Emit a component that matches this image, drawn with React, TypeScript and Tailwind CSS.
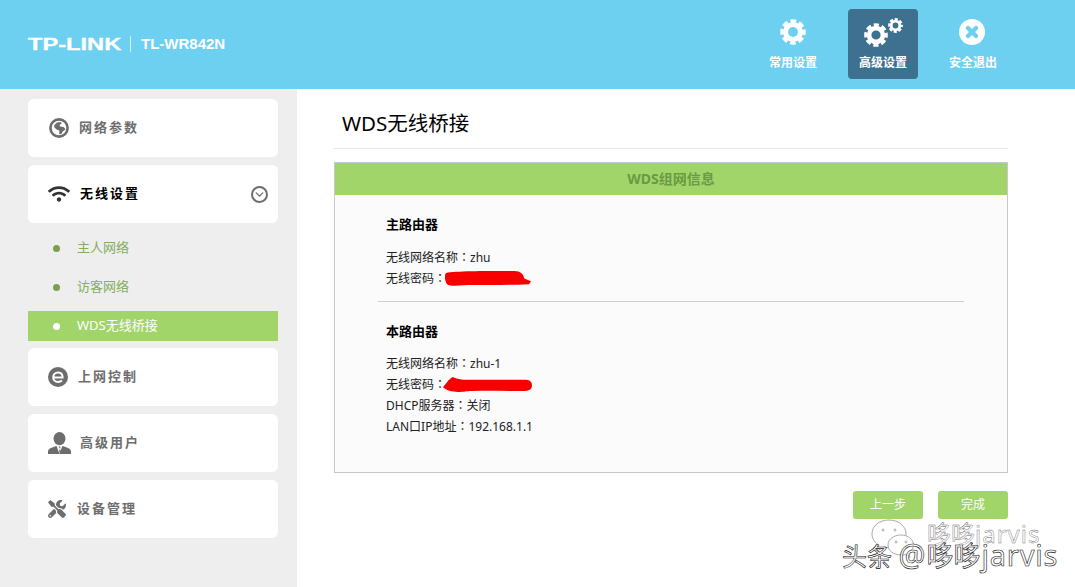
import { ChevronDown } from "lucide-react";
import { FaTools, FaWifi } from "react-icons/fa";

const font = { fontFamily: '"Noto Sans", "Noto Sans CJK SC", sans-serif' };

function Scribble({ className, d }: { className: string; d: string }) {
  return (
    <svg className={className} viewBox="0 0 90 16" preserveAspectRatio="none" fill="#f80000">
      <path d={d} />
    </svg>
  );
}

// Noto's TC face centres the full width colon the way the reference does
function Colon() {
  return <span className="leading-none" style={{ fontFamily: '"Noto Sans CJK TC", sans-serif' }}>：</span>;
}

function Gear({ size, className }: { size: number; className?: string }) {
  return (
    <svg width={size} height={size} viewBox="0 0 26 26" fill="none" stroke="#fff" className={className}>
      <circle cx="13" cy="13" r="7.5" strokeWidth="5" />
      <circle cx="13" cy="13" r="11" strokeWidth="3.6" strokeDasharray="5.6 3.04" strokeDashoffset="2.8" />
    </svg>
  );
}

function GlobeIcon() {
  return (
    <svg width="20" height="20" viewBox="0 0 20 20" fill="none">
      <circle cx="10" cy="10" r="8.6" stroke="#6d6d6d" strokeWidth="2.6" />
      <path d="M5 7.5 8 4.5l4-.5.6 1.6-2 1.4.4 1.6 3.6.4 2 2.2-2.8 2.4-1.6 2.6-2-.2.2-3.4-2.4-.8L5.6 9.8z" fill="#6d6d6d" />
    </svg>
  );
}

function EIcon() {
  return (
    <svg width="20" height="20" viewBox="0 0 20 20">
      <circle cx="10" cy="10" r="10" fill="#6d6d6d" />
      <path d="M5.2 10.4h9.400c0-3.200-2-5-4.500-5-2.700 0-4.900 2-4.900 4.800s2.100 4.800 4.900 4.800c1.600 0 2.900-.5 3.900-1.400" fill="none" stroke="#fff" strokeWidth="2" />
    </svg>
  );
}

function UserIcon() {
  return (
    <svg width="23" height="22" viewBox="0 0 23 22">
      <ellipse cx="11.5" cy="6.6" rx="6" ry="6.6" fill="#6d6d6d" />
      <path d="M0 22v-2.600c0-2.600 3.400-3.800 8.600-5.400L11.500 22l2.900-8c5.200 1.600 8.600 2.800 8.600 5.400V22z" fill="#6d6d6d" />
      <path d="M10.500 14.600h2l-.4 1.800.8 3.400-.9 1.400-.9-1.400.8-3.400z" fill="#6d6d6d" />
    </svg>
  );
}

function CloseIcon() {
  return (
    <svg width="26" height="26" viewBox="0 0 26 26">
      <circle cx="13" cy="13" r="13" fill="#fff" />
      <path d="M9 9l8 8m0-8l-8 8" stroke="#6dd0f1" strokeWidth="4.4" strokeLinecap="round" />
    </svg>
  );
}

function NavButton({ label, active, children }: { label: string; active?: boolean; children: React.ReactNode }) {
  return (
    <div className={"w-[70px] h-[70px] rounded-[4px] flex flex-col items-center text-white text-xs font-bold " + (active ? "bg-[#3d718f]" : "")}>
      <div className="h-[46px] w-full flex items-center justify-center">{children}</div>
      <span className="leading-[16px]">{label}</span>
    </div>
  );
}

function MenuCard({ icon, label, dark, iconBox = "w-[32px]", children }: { icon: React.ReactNode; label: string; dark?: boolean; iconBox?: string; children?: React.ReactNode }) {
  return (
    <div className="h-[58px] bg-white rounded-[6px] pl-[20px] pr-[10px] flex items-center">
      <div className={"shrink-0 " + iconBox}>{icon}</div>
      <span className={"text-[13px] font-bold tracking-[2px] " + (dark ? "text-black" : "text-[#6d6d6d]")}>{label}</span>
      {children}
    </div>
  );
}

function SubItem({ label, active }: { label: string; active?: boolean }) {
  return (
    <div className={"h-[30px] pl-[25px] flex items-center text-[13px] " + (active ? "bg-[#a2d569] text-white" : "text-[#84ad5c]")}>
      <span className={"w-[7px] h-[7px] rounded-full mr-[17px] " + (active ? "bg-white" : "bg-[#7aa04f]")} />
      {label}
    </div>
  );
}

export default function App() {
  return (
    <div className="relative w-[1075px] h-[587px] overflow-hidden bg-white flex flex-col" style={font}>
      {/* header */}
      <header className="h-[89px] shrink-0 bg-[#6dd0f1] pl-[28px] pr-[67px] pb-[1px] flex items-center justify-between">
        <div className="flex items-center text-white" style={{ fontFamily: '"Liberation Sans", sans-serif' }}>
          <span className="inline-block w-[93px] text-[17px] font-bold leading-none scale-x-[1.39] origin-left [-webkit-text-stroke:0.3px_#fff]">TP-LINK</span>
          <span className="w-px h-[16px] bg-white/70 ml-[9px] mr-[10px]" />
          <span className="text-[15px] font-bold">TL-WR842N</span>
        </div>
        <div className="flex gap-[20px]">
          <NavButton label="常用设置"><Gear size={26} /></NavButton>
          <NavButton label="高级设置" active>
            <div className="flex items-start">
              <Gear size={24} className="mt-[6px]" />
              <Gear size={15} className="mt-[1px]" />
            </div>
          </NavButton>
          <NavButton label="安全退出">
            <div className="mr-[2px] mb-[1px]"><CloseIcon /></div>
          </NavButton>
        </div>
      </header>

      <div className="flex flex-1 min-h-0">
        {/* sidebar */}
        <aside className="w-[297px] shrink-0 bg-[#eeeeee] pl-[28px] pr-[19px] pt-[10px] flex flex-col">
          <MenuCard icon={<GlobeIcon />} label="网络参数" iconBox="w-[31px] pl-[1px]" />
          <div className="h-[8px]" />
          <MenuCard icon={<FaWifi size={22} color="#333" />} label="无线设置" dark>
            <div className="ml-auto w-[17px] h-[17px] rounded-full border-2 border-[#6d6d6d] flex items-center justify-center">
              <ChevronDown size={13} strokeWidth={2.5} color="#6d6d6d" />
            </div>
          </MenuCard>
          <div className="flex flex-col gap-[9px] pt-[10px] pb-[7px]">
            <SubItem label="主人网络" />
            <SubItem label="访客网络" />
            <SubItem label="WDS无线桥接" active />
          </div>
          <div className="flex flex-col gap-[8px]">
            <MenuCard icon={<EIcon />} label="上网控制" iconBox="w-[30px]" />
            <MenuCard icon={<UserIcon />} label="高级用户" />
            <MenuCard icon={<FaTools size={18} color="#6d6d6d" />} label="设备管理" iconBox="w-[29px]" />
          </div>
        </aside>

        {/* main */}
        <main className="flex-1 pl-[37px] pr-[67px]">
          <div className="h-[60px] border-b border-[#e8e8e8] pl-[8px] pt-[17px] text-[20.5px] leading-[34px] text-black">WDS无线桥接</div>
          <section className="mt-[13px] h-[311px] border border-[#c8c8c8] bg-[#fbfbfb] flex flex-col">
            <div className="h-[32px] shrink-0 bg-[#a2d569] text-center text-[14px] font-bold leading-[32px] text-[#6b9a44]">WDS组网信息</div>
            <div className="flex-1 pl-[43px] pr-[43px] text-[12px] text-[#222]">
              <div className="pl-[8px] pt-[20px] h-[106px]">
                <h3 className="text-[13px] leading-[18px] font-bold text-black mb-[14px]">主路由器</h3>
                <p className="leading-[21px]">无线网络名称<Colon />zhu</p>
                <p className="relative leading-[21px]">
                  无线密码<Colon />
                  <Scribble className="absolute left-[59px] top-[3px] w-[87px] h-[15px]" d="M1 2C12 0 40 0 72 0c6 0 9 3 10 8l7 3-2 3c-20 1-42 1-58 1-12 0-23 2-27-1C0 11-1 5 1 2z" />
                </p>
              </div>
              <div className="border-t border-[#cfcfcf] pl-[8px] pt-[20px]">
                <h3 className="text-[13px] leading-[18px] font-bold text-black mb-[13px]">本路由器</h3>
                <p className="leading-[21px]">无线网络名称<Colon />zhu-1</p>
                <p className="relative leading-[21px]">
                  无线密码<Colon />
                  <Scribble className="absolute left-[57px] top-[3px] w-[89px] h-[15px]" d="M0 11C3 7 6 2 10 0c4 2 8 3 16 3 20 0 38 0 56 0 6 0 8 2 8 6 0 4-3 6-9 6-18 0-36-1-52 0-6 0-7 1-14 1C9 16 3 14 0 11z" />
                </p>
                <p className="leading-[21px]">DHCP服务器<Colon />关闭</p>
                <p className="leading-[21px]">LAN口IP地址<Colon />192.168.1.1</p>
              </div>
            </div>
          </section>
          <div className="mt-[18px] flex justify-end gap-[15px]">
            <button className="w-[70px] h-[28px] rounded-[3px] bg-[#a2d569] text-white text-[12px]">上一步</button>
            <button className="w-[70px] h-[28px] rounded-[3px] bg-[#a2d569] text-white text-[12px]">完成</button>
          </div>
        </main>
      </div>

      {/* watermark over the page */}
      <svg className="absolute left-[870px] top-[517px]" width="48" height="44" viewBox="0 0 48 44" fill="#fff" stroke="#aaa" strokeWidth="1">
        <path d="M19 3C9 3 2 9 2 17c0 5 3 9 7 11l-2 6 7-4c2 .5 3 .5 5 .5 10 0 17-6 17-13.500S29 3 19 3z" />
        <path d="M31 18c-7 0-13 4-13 10s6 10 13 10c1.500 0 3 0 4-.5l5 3-1.500-5c3-2 5-4.500 5-7.500 0-6-6-10-12.500-10z" />
        <circle cx="13" cy="13" r="1" />
        <circle cx="25" cy="13" r="1" />
        <circle cx="26" cy="25" r="1" />
        <circle cx="36" cy="25" r="1" />
      </svg>
      <span className="absolute left-[927px] top-[519px] text-[24px] leading-[30px] text-white [-webkit-text-stroke:0.4px_#666]">哆哆<span className="tracking-[1px]">jarvis</span></span>
      <span className="absolute left-[842px] top-[538px] text-[25px] leading-[34px] text-white [-webkit-text-stroke:0.6px_#111]">头条 <span className="text-[30px] mr-[1px]">@</span><span className="text-[27px] mr-[1px]">哆哆</span><span className="text-[29px] tracking-[0.8px]">jarvis</span></span>
    </div>
  );
}
